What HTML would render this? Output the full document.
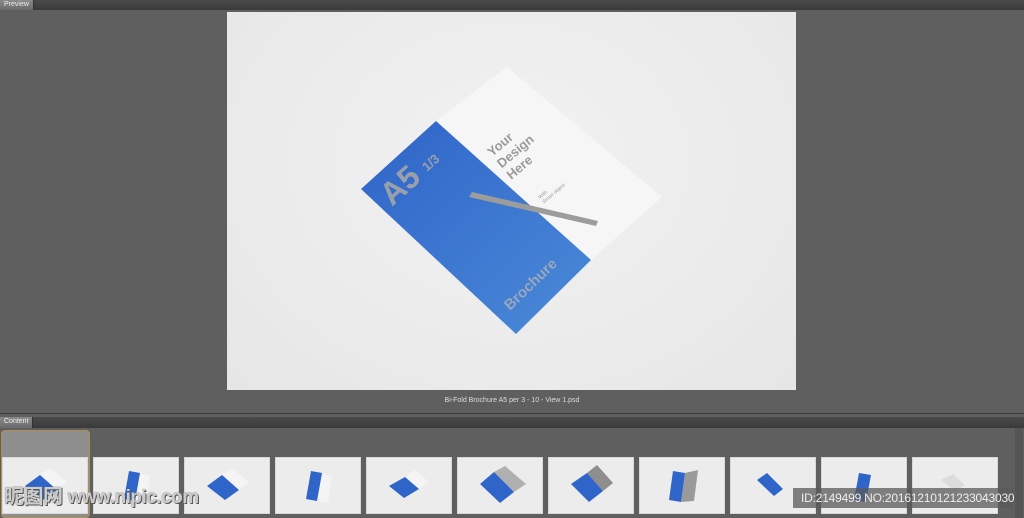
<!DOCTYPE html>
<html><head><meta charset="utf-8"><style>
*{margin:0;padding:0;box-sizing:border-box}
html,body{width:1024px;height:518px;overflow:hidden}
body{background:#5f5f5f;position:relative;font-family:"Liberation Sans",sans-serif}
.bar{position:absolute;left:0;width:1024px;background:linear-gradient(#4a4a4a,#3a3a3a);}
.tab{position:absolute;left:0;height:100%;background:linear-gradient(#8a8a8a,#6a6a6a);color:#eee;font-size:7px;line-height:10px;padding:0 4px;border-right:1px solid #333}
.th{position:absolute;top:457px;width:86px;height:57px;background:#ececec;border:1px solid #d8d8d8}
</style></head><body>
<div class="bar" style="top:0;height:10px"><div class="tab" style="width:34px">Preview</div></div>
<div style="position:absolute;left:227px;top:12px;width:569px;height:378px;background:radial-gradient(ellipse at 50% 40%,#f2f2f2,#e6e6e6)">
<svg width="569" height="378" viewBox="227 12 569 378" style="position:absolute;left:0;top:0">
<defs><linearGradient id="bg" x1="0" y1="0" x2="1" y2="1"><stop offset="0" stop-color="#2f64c8"/><stop offset="1" stop-color="#4a8ad8"/></linearGradient></defs>
<polygon points="436,121 507,67 662,197 591,260" fill="#f6f6f6"/>
<polygon points="361,189 436,121 591,260 516,334" fill="url(#bg)"/>
<polygon points="469,197 472,192 598,221 596,226" fill="#9c9c9c"/>
<text transform="translate(392,207) rotate(-42)" font-size="32" font-weight="bold" fill="#9aa0aa">A5</text>
<text transform="translate(427,172) rotate(-42)" font-size="13" font-weight="bold" fill="#9aa0aa">1/3</text>
<g transform="translate(492,157) rotate(-40)" font-size="13" font-weight="bold" fill="#9a9a9a">
<text x="0" y="0">Your</text><text x="0" y="15">Design</text><text x="0" y="30">Here</text></g>
<g transform="translate(540,199) rotate(-40)" font-size="5" fill="#999"><text>With</text><text y="6">Smart object</text></g>
<text transform="translate(510,311) rotate(-44)" font-size="15" font-weight="bold" fill="#9aa6bd">Brochure</text>
</svg></div>
<div style="position:absolute;left:0;top:396px;width:1024px;text-align:center;color:#ddd;font-size:7px;line-height:10px">Bi-Fold Brochure A5 per 3 - 10 - View 1.psd</div>
<div style="position:absolute;left:0;top:413px;width:1024px;height:1px;background:#3a3a3a"></div>
<div class="bar" style="top:417px;height:11px"><div class="tab" style="width:33px">Content</div></div>
<div style="position:absolute;left:1px;top:430px;width:89px;height:88px;background:#8e8e8e;border:1px solid #b09050;border-radius:4px"></div>
<div style="position:absolute;left:1015px;top:428px;width:8px;height:90px;background:#555"></div>
<div class="th" style="left:2px"><svg width="86" height="57"><polygon points="37,17 47,10 64,24 54,32" fill="#f4f4f4"/><polygon points="22,28 37,17 54,32 40,42" fill="#2f64c8"/></svg></div>
<div class="th" style="left:93px"><svg width="86" height="57"><g transform="translate(43,29)"><polygon points="0,-14 13,-11 9,16 -4,13" fill="#f4f4f4"/><polygon points="-8,-16 3,-14 -2,14 -13,12" fill="#2f64c8"/></g></svg></div>
<div class="th" style="left:184px"><svg width="86" height="57"><polygon points="37,17 47,10 64,24 54,32" fill="#f4f4f4"/><polygon points="22,28 37,17 54,32 40,42" fill="#2f64c8"/></svg></div>
<div class="th" style="left:275px"><svg width="86" height="57"><g transform="translate(43,29)"><polygon points="0,-14 13,-11 9,16 -4,13" fill="#f4f4f4"/><polygon points="-8,-16 3,-14 -2,14 -13,12" fill="#2f64c8"/></g></svg></div>
<div class="th" style="left:366px"><svg width="86" height="57"><polygon points="38,19 48,12 62,24 52,31" fill="#f4f4f4"/><polygon points="22,28 38,19 52,31 37,40" fill="#2f64c8"/></svg></div>
<div class="th" style="left:457px"><svg width="86" height="57"><polygon points="36,14 47,8 68,26 56,34" fill="#b0b0b0"/><polygon points="22,26 36,14 56,34 42,45" fill="#2f64c8"/></svg></div>
<div class="th" style="left:548px"><svg width="86" height="57"><polygon points="38,15 48,7 64,25 54,33" fill="#8e8e8e"/><polygon points="22,26 38,15 54,33 40,44" fill="#2f64c8"/></svg></div>
<div class="th" style="left:639px"><svg width="86" height="57"><g transform="translate(43,29)"><polygon points="2,-14 15,-17 11,14 -2,15" fill="#9a9a9a"/><polygon points="-10,-16 2,-14 -2,15 -14,13" fill="#2f64c8"/></g></svg></div>
<div class="th" style="left:730px"><svg width="86" height="57"><polygon points="26,22 36,15 52,31 43,38" fill="#2f64c8"/></svg></div>
<div class="th" style="left:821px"><svg width="86" height="57"><g transform="translate(43,29)"><polygon points="-6,-14 6,-12 1,15 -11,13" fill="#2f64c8"/></g></svg></div>
<div class="th" style="left:912px"><svg width="86" height="57"><polygon points="28,22 40,16 52,27 42,33" fill="#dcdcdc"/></svg></div>
<div style="position:absolute;left:4px;top:485px;white-space:nowrap;font-size:20px;font-weight:bold;color:#ccc;font-family:'Liberation Sans','Noto Sans CJK SC',sans-serif;text-shadow:0 0 1px #555,1px 1px 0 #555;letter-spacing:-0.5px;line-height:24px">昵图网 <span style="font-size:19px">www.nipic.com</span></div>
<div style="position:absolute;left:793px;top:488px;width:221px;height:20px;white-space:nowrap;overflow:hidden;background:rgba(90,90,90,0.75);color:#eee;font-size:12px;line-height:20px;padding-left:8px;letter-spacing:-0.2px">ID:2149499 NO:20161210121233043030</div>
</body></html>
